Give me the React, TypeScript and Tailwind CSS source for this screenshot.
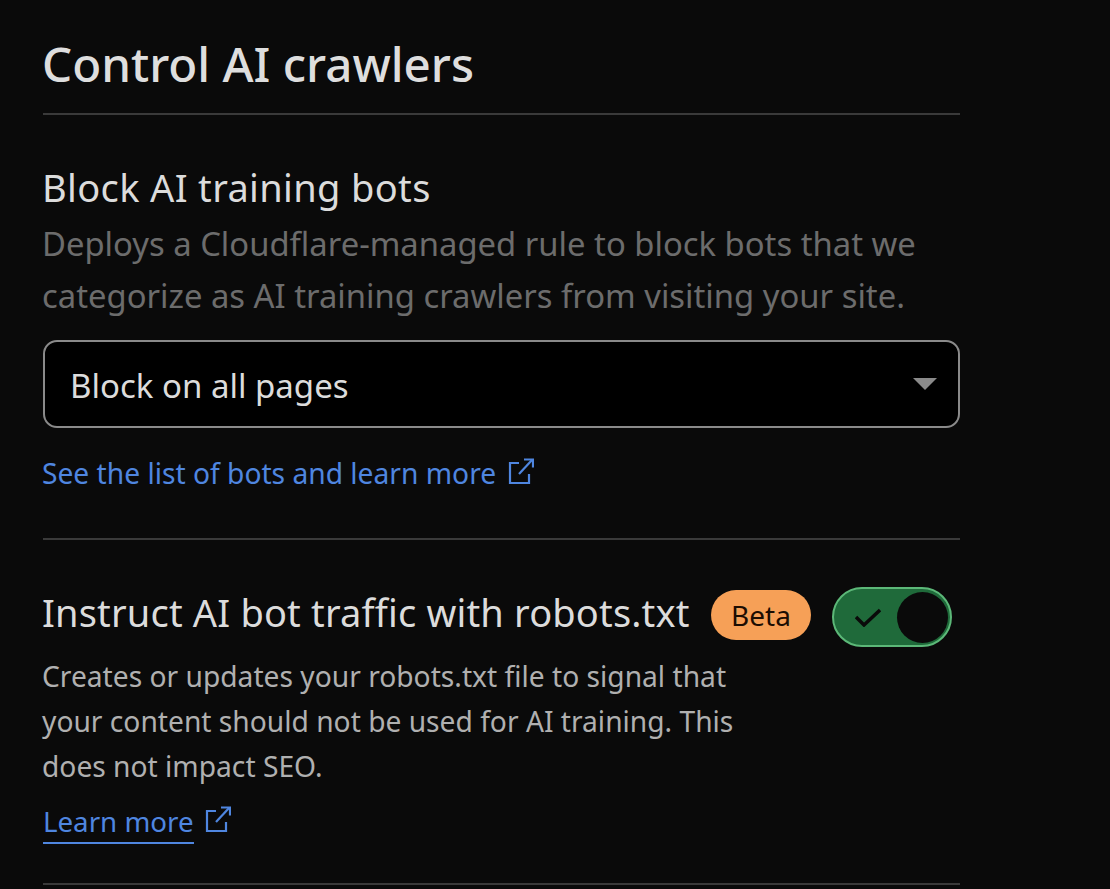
import React from 'react';

const ExternalIcon = ({ className }: { className: string }) => (
  <svg viewBox="0 0 26 26" fill="none" stroke="currentColor" strokeWidth="2.2" className={className}>
    <path d="M11 5H2v20h19v-9" />
    <path d="M11 16L24 2" />
    <path d="M16 1.500h9v8" />
  </svg>
);

const App: React.FC = () => {
  return (
    <div className="h-[889px] w-[1110px] overflow-hidden bg-[#0a0a0a] pl-[43px] font-['Noto_Sans','Open_Sans',sans-serif]">
      <div className="w-[917px]">
        {/* Titulo */}
        <div className="h-[115px] border-b-2 border-[#3a3a3a] pt-[29px]">
          <h1 className="-ml-[1px] text-[47.500px] leading-[70px] font-medium text-[#dedede]">Control AI crawlers</h1>
        </div>

        {/* Block AI training bots */}
        <div className="h-[425px] border-b-2 border-[#3a3a3a] pt-[46px]">
          <h2 className="-ml-[1px] text-[38px] leading-[52px] tracking-[0.35px] text-[#dcdcdc]">Block AI training bots</h2>
          <p className="mt-[5px] -ml-[1px] text-[32.800px] leading-[52px] text-[#6c6c6c]">
            Deploys a Cloudflare-managed rule to block bots that we categorize as AI training crawlers from visiting your site.
          </p>
          <div className="mt-[18px] flex h-[88px] items-center justify-between rounded-[14px] border-2 border-[#8a8a8a] bg-black pr-[21px] pl-[25px]">
            <span className="mt-[4px] text-[33px] text-[#dcdcdc]">Block on all pages</span>
            <span className="h-0 w-0 border-x-[12px] border-t-[12px] border-x-transparent border-t-[#8a8a8a]" />
          </div>
          <div className="mt-[24px] flex items-center gap-[12px] text-[#4f86e0]">
            <a className="-ml-[1px] text-[28.200px] leading-[42px]">See the list of bots and learn more</a>
            <ExternalIcon className="mb-[4px] h-[26px] w-[26px]" />
          </div>
        </div>

        {/* robots.txt */}
        <div className="h-[345px] border-b-2 border-[#3a3a3a] pt-[47px]">
          <div className="flex h-[60px] items-center">
            <h2 className="mb-[10px] -ml-[1px] w-[649px] text-[38px] leading-[52px] tracking-[0.17px] whitespace-nowrap text-[#dcdcdc]">Instruct AI bot traffic with robots.txt</h2>
            <span className="mb-[4px] ml-[20px] flex h-[50px] w-[100px] items-center justify-center rounded-full bg-[#f6a057] text-[28px] text-[#1c0d02]">Beta</span>
            <div className="ml-[21px] flex h-[60px] w-[120px] items-center justify-between rounded-full border-2 border-[#5cb878] bg-[#1f6a3a] pr-[2px] pl-[21px]">
              <svg viewBox="0 0 26 20" fill="none" stroke="#0a0a0a" strokeWidth="3.500" className="h-[20px] w-[26px]">
                <path d="M1 10l8 8L25 3" />
              </svg>
              <span className="h-[51px] w-[51px] rounded-full bg-[#0a0a0a]" />
            </div>
          </div>
          <p className="mt-[7px] -ml-[1px] w-[700px] text-[28.200px] leading-[45px] text-[#b0b0b0]">
            Creates or updates your robots.txt file to signal that your content should not be used for AI training. This does not impact SEO.
          </p>
          <div className="mt-[11px] flex items-start gap-[11px] text-[#4f86e0]">
            <a className="h-[44px] border-b-2 border-[#4f86e0] text-[27.700px] leading-[42px]">Learn more</a>
            <ExternalIcon className="mt-[6px] h-[26px] w-[26px]" />
          </div>
        </div>
      </div>
    </div>
  );
};

export default App;
